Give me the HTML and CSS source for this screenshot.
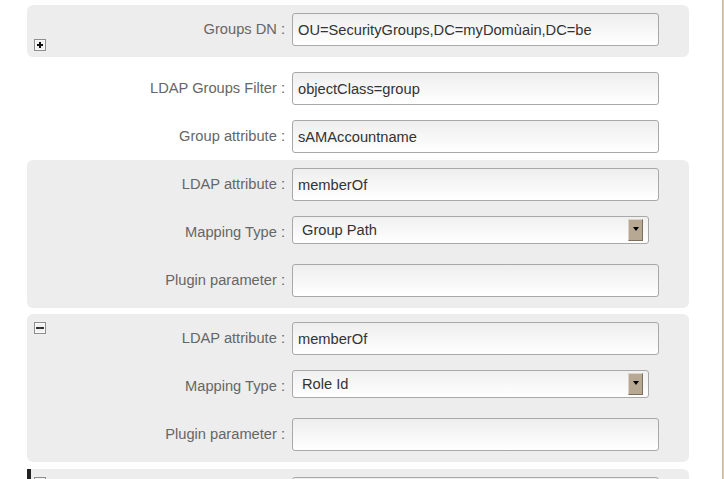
FILE: index.html
```html
<!DOCTYPE html>
<html>
<head>
<meta charset="utf-8">
<link rel="stylesheet" href="styles.css">
</head>
<body>
<div class="page">
  <div class="form">
    <div class="panel">
      <div class="toggle-col">
        <svg class="toggle toggle-low" width="12" height="12" viewBox="0 0 12 12"><rect x="0.5" y="0.5" width="11" height="11" fill="#f2f2f2" stroke="#8e8e8e"/><rect x="1.5" y="1.5" width="9" height="9" fill="none" stroke="#fafafa"/><rect x="3" y="5" width="6" height="2" fill="#111"/><rect x="5" y="3" width="2" height="6" fill="#111"/></svg>
      </div>
      <div class="rows">
        <div class="row"><label class="lbl">Groups DN :</label><input class="field" type="text" value="OU=SecurityGroups,DC=myDomùain,DC=be"></div>
      </div>
    </div>

    <div class="row solo first"><label class="lbl">LDAP Groups Filter :</label><input class="field" type="text" value="objectClass=group"></div>
    <div class="row solo second"><label class="lbl">Group attribute :</label><input class="field" type="text" value="sAMAccountname"></div>

    <div class="panel gap-a">
      <div class="toggle-col"></div>
      <div class="rows">
        <div class="row"><label class="lbl">LDAP attribute :</label><input class="field" type="text" value="memberOf"></div>
        <div class="row"><label class="lbl">Mapping Type :</label>
          <div class="select"><span class="sel-text">Group Path</span><span class="arrow"><span class="tri"></span></span></div>
        </div>
        <div class="row"><label class="lbl">Plugin parameter :</label><input class="field" type="text" value=""></div>
      </div>
    </div>

    <div class="panel gap-b">
      <div class="toggle-col">
        <svg class="toggle" width="12" height="12" viewBox="0 0 12 12"><rect x="0.5" y="0.5" width="11" height="11" fill="#f2f2f2" stroke="#8e8e8e"/><rect x="1.5" y="1.5" width="9" height="9" fill="none" stroke="#fafafa"/><rect x="2" y="5" width="8" height="2" fill="#333"/></svg>
      </div>
      <div class="rows">
        <div class="row"><label class="lbl">LDAP attribute :</label><input class="field" type="text" value="memberOf"></div>
        <div class="row"><label class="lbl">Mapping Type :</label>
          <div class="select"><span class="sel-text">Role Id</span><span class="arrow"><span class="tri"></span></span></div>
        </div>
        <div class="row"><label class="lbl">Plugin parameter :</label><input class="field" type="text" value=""></div>
      </div>
    </div>

    <div class="panel selected gap-c">
      <div class="toggle-col">
        <svg class="toggle" width="12" height="12" viewBox="0 0 12 12"><rect x="0.5" y="0.5" width="11" height="11" fill="#f2f2f2" stroke="#8e8e8e"/><rect x="2" y="5" width="8" height="2" fill="#333"/></svg>
      </div>
      <div class="rows">
        <div class="row"><label class="lbl">LDAP attribute :</label><input class="field" type="text" value="memberOf"></div>
      </div>
    </div>
  </div>
  <div class="edge"></div>
</div>
</body>
</html>
```

FILE: styles.css
```css
html, body {
  margin: 0;
  padding: 0;
  background: #ffffff;
}
body {
  font-family: "Liberation Sans", Arial, sans-serif;
  font-size: 14.67px;
  overflow: hidden;
  height: 479px;
}
.page {
  display: flex;
  justify-content: space-between;
  height: 479px;
}
.form {
  margin-left: 27px;
  width: 662px;
  padding-top: 5px;
  display: flex;
  flex-direction: column;
  flex-shrink: 0;
}
.panel {
  background: #ededed;
  border-radius: 6px;
  display: flex;
  padding: 8px 0 11px 7px;
  flex-shrink: 0;
}
.panel.gap-a { margin-top: 7px; }
.panel.gap-b { margin-top: 6px; }
.panel.gap-c { margin-top: 7px; }
.panel.selected {
  border-left: 4px solid #222222;
  border-radius: 0 6px 6px 0;
  padding-left: 3px;
}
.toggle-col {
  width: 12px;
  flex-shrink: 0;
  display: flex;
  flex-direction: column;
}
.toggle { display: block; }
.toggle-low {
  margin-top: 26px;
  margin-bottom: -5px;
}
.rows {
  display: flex;
  flex-direction: column;
  gap: 15px;
}
.row {
  display: flex;
  align-items: flex-start;
  gap: 7px;
  height: 33px;
  flex-shrink: 0;
}
.row.solo { margin-left: 19px; }
.row.first { margin-top: 15px; }
.row.second { margin-top: 15px; }
.lbl {
  width: 239px;
  text-align: right;
  line-height: 33px;
  color: #666666;
  white-space: nowrap;
}
.field {
  width: 367px;
  height: 33px;
  box-sizing: border-box;
  margin: 0;
  border: 1px solid #a8a8a8;
  border-radius: 3px;
  padding: 0 5px;
  font: inherit;
  color: #333333;
  background: linear-gradient(#eeeeee, #ffffff);
  outline: none;
}
.select {
  width: 357px;
  height: 28px;
  box-sizing: border-box;
  border: 1px solid #a8a8a8;
  border-radius: 3px;
  padding: 0 5px 0 9px;
  display: flex;
  align-items: center;
  justify-content: space-between;
  color: #333333;
  background: linear-gradient(#f0f0f0, #ffffff);
}
.arrow {
  width: 15px;
  height: 22px;
  box-sizing: border-box;
  background: #b6a893;
  border: 1px solid;
  border-color: #dcd3c6 #7b6e5c #7b6e5c #dcd3c6;
  display: flex;
  align-items: center;
  justify-content: center;
}
.tri {
  width: 0;
  height: 0;
  border-left: 3px solid transparent;
  border-right: 3px solid transparent;
  border-top: 4px solid #000000;
  margin-bottom: 2px;
}
.edge {
  width: 2px;
  height: 479px;
  background: linear-gradient(to right, #c6b494, #ddd1bc);
  flex-shrink: 0;
}
```
